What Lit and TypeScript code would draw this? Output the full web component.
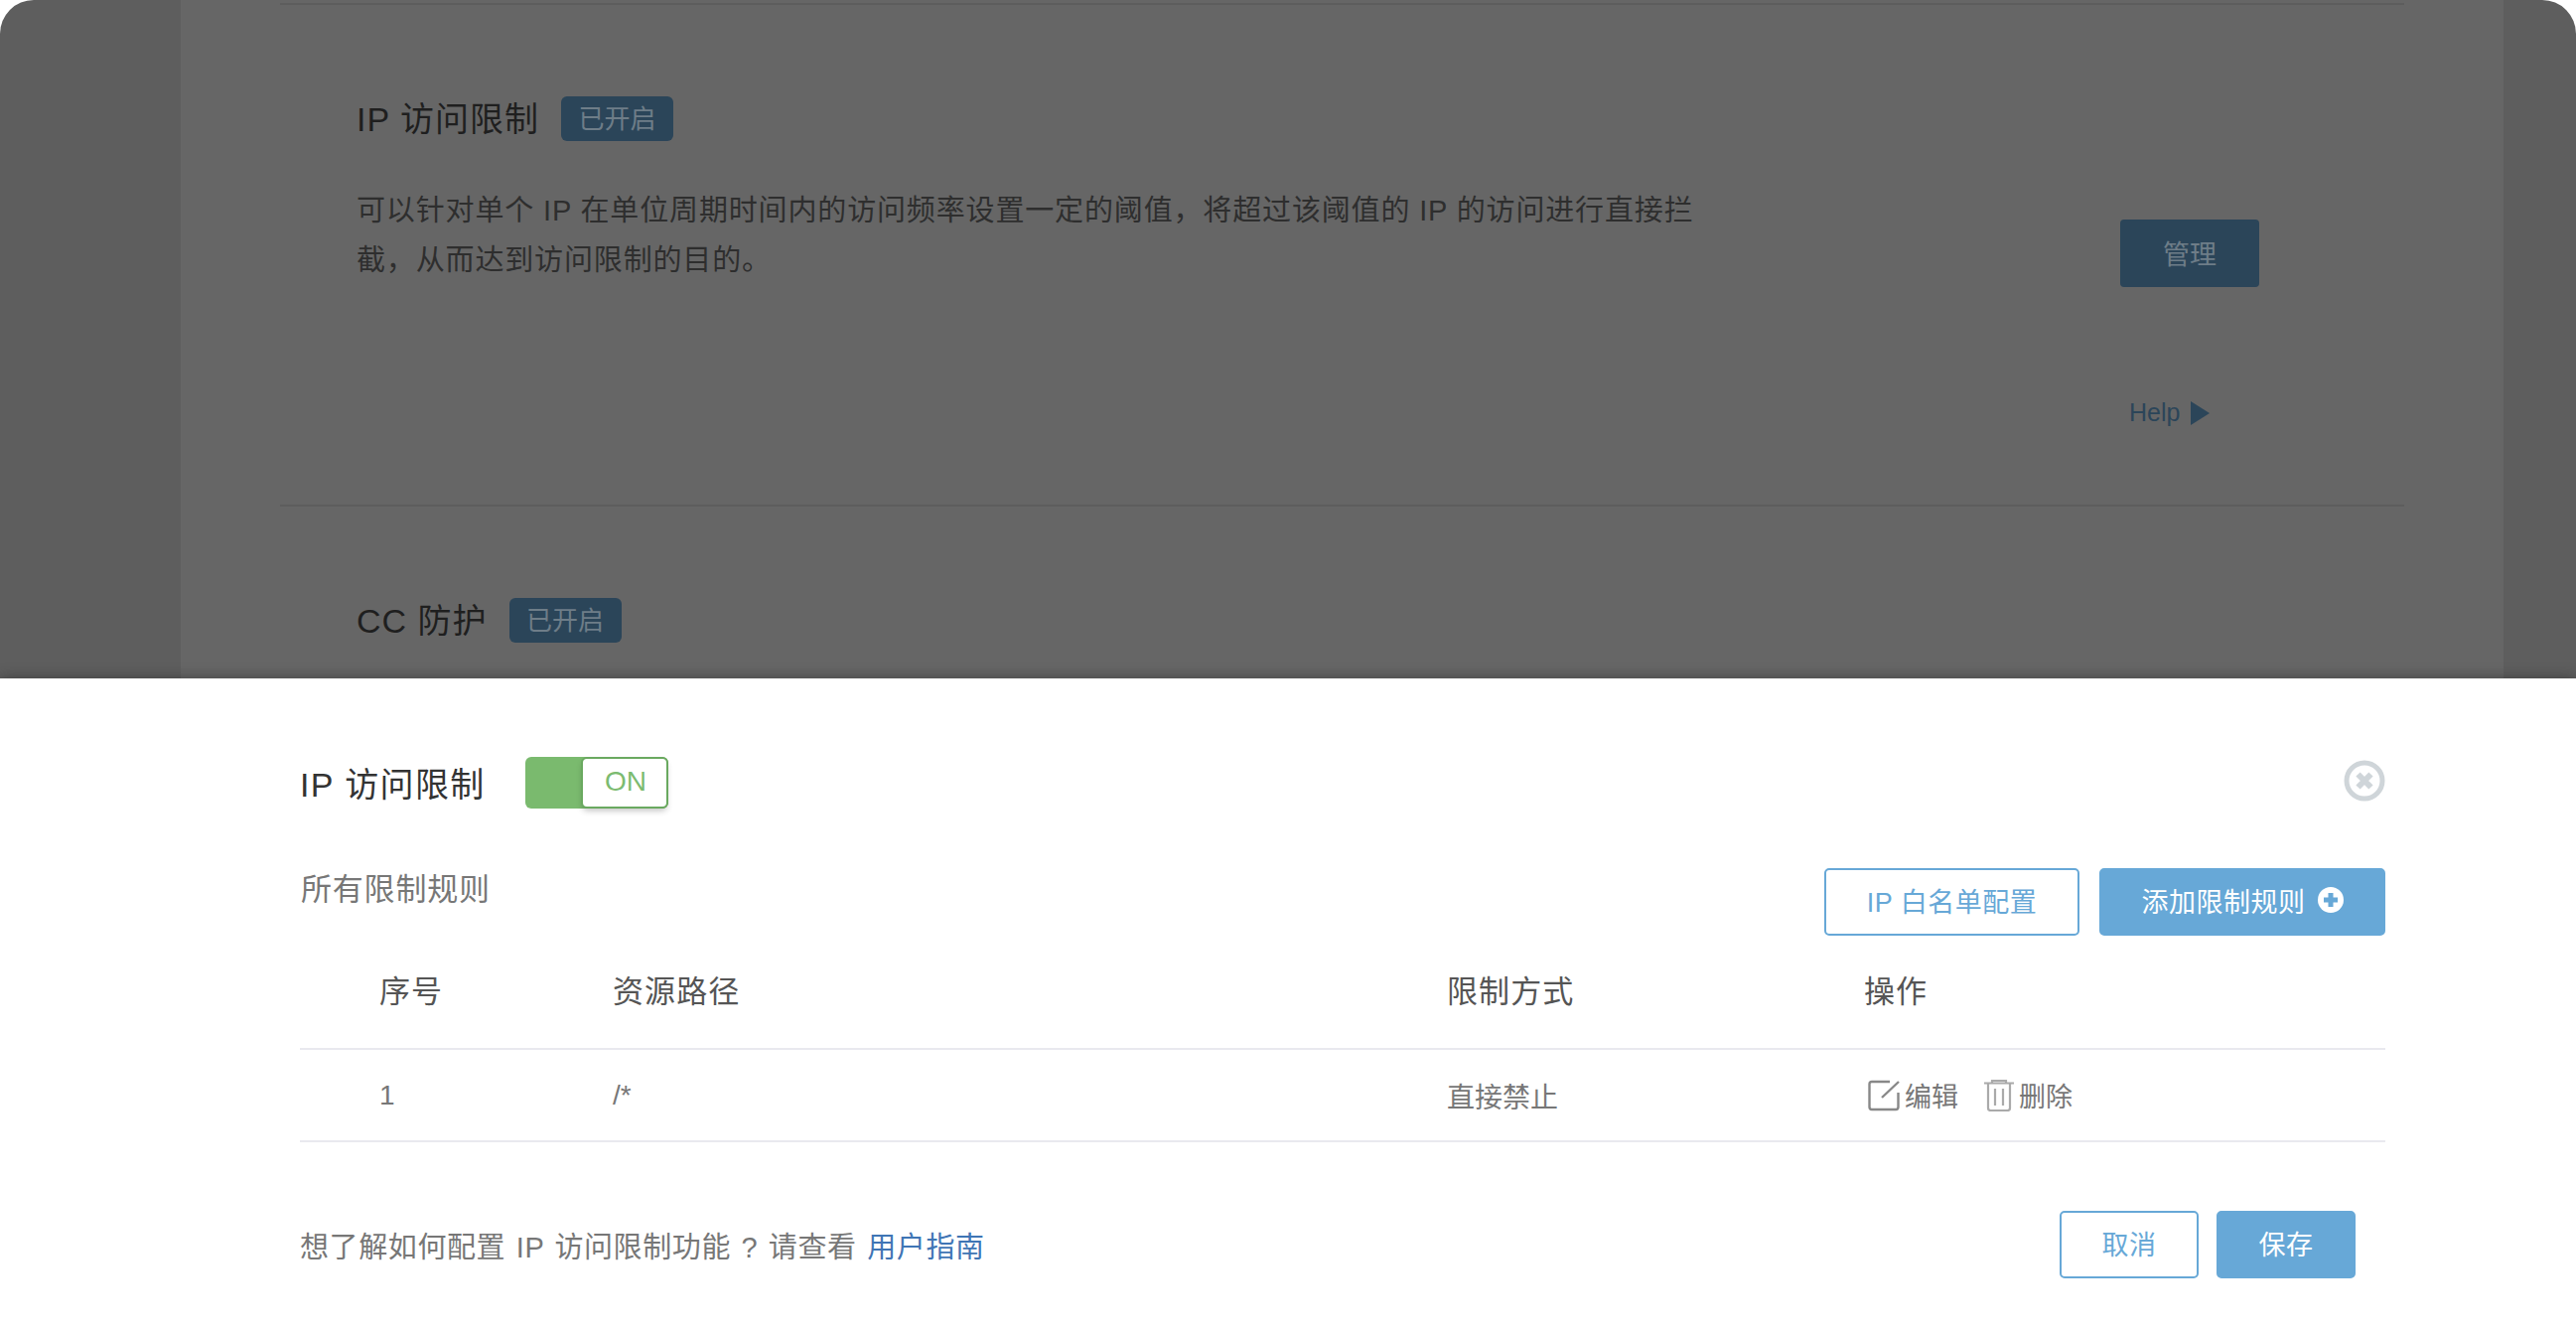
import { LitElement, html, css } from 'lit';
import { customElement } from 'lit/decorators.js';

@customElement('app-root')
export class AppRoot extends LitElement {
	static styles = css`
		:host {
			display: flex;
			flex-direction: column;
			height: 1340px;
			background: #fff;
			overflow: hidden;
			font-family: 'Liberation Sans', 'Noto Sans CJK SC', sans-serif;
		}

		/* dimmed page behind the drawer */
		.backdrop {
			height: 683px;
			flex: none;
			display: grid;
			grid-template-columns: 182px 1fr 73px;
			background: #5e5e5e;
			border-radius: 34px 34px 0 0;
			overflow: hidden;
		}
		.content {
			background: #666;
			padding: 3px 100px 0;
		}
		.section {
			border-top: 2px solid #5d5d5d;
			display: flex;
			justify-content: space-between;
			padding: 92px 146px 0 77px;
		}
		.section.first {
			height: 411px;
		}
		.heading {
			display: flex;
			align-items: center;
			gap: 22px;
			height: 45px;
		}
		.heading h2 {
			margin: -5px 0 0;
			font-size: 34px;
			font-weight: 400;
			letter-spacing: 1px;
			color: #1f1f1f;
		}
		.tag {
			height: 45px;
			box-sizing: border-box;
			padding: 0 17.5px 4px;
			display: flex;
			align-items: center;
			border-radius: 6px;
			background: #2b4559;
			color: #6e7d88;
			font-size: 26px;
		}
		.desc {
			margin: 45px 0 0;
			width: 1360px;
			font-size: 29px;
			line-height: 50px;
			letter-spacing: 0.85px;
			color: #2e2e2e;
		}
		.side {
			width: 140px;
			padding-top: 124px;
			display: flex;
			flex-direction: column;
			align-items: flex-start;
		}
		.manage {
			width: 140px;
			height: 68px;
			box-sizing: border-box;
			padding-bottom: 2px;
			display: flex;
			align-items: center;
			justify-content: center;
			border-radius: 4px;
			background: #2b4559;
			color: #6e7d88;
			font-size: 27px;
		}
		.help {
			margin: 112px 0 0 9px;
			display: flex;
			align-items: center;
			gap: 11px;
			color: #2b4559;
			font-size: 25px;
		}
		.help svg {
			width: 19px;
			height: 28px;
		}

		/* drawer */
		.drawer {
			flex: 1;
			position: relative;
			background: #fff;
			box-shadow: 0 0 14px rgba(0, 0, 0, 0.35);
			padding: 79px 192px 0 302px;
		}
		.drawer-head {
			display: flex;
			align-items: center;
			height: 52px;
		}
		.drawer-head h2 {
			margin: -2px 0 0;
			font-size: 34px;
			font-weight: 400;
			letter-spacing: 1.4px;
			color: #333;
			width: 227px;
		}
		.toggle {
			width: 144px;
			height: 52px;
			box-sizing: border-box;
			padding: 2px;
			border-radius: 6px;
			background: #7aba6e;
			display: flex;
			justify-content: flex-end;
		}
		.knob {
			width: 84px;
			box-sizing: border-box;
			padding: 0 0 3px 2px;
			display: flex;
			align-items: center;
			justify-content: center;
			border-radius: 4px;
			background: #fff;
			color: #7cbb70;
			font-size: 28px;
			box-shadow: 0 0 0 2px #6aa960, 0 4px 6px rgba(0, 0, 0, 0.25);
		}
		.close {
			width: 42px;
			height: 42px;
			margin: -5px 0 0 auto;
		}
		.toolbar {
			margin-top: 60px;
			display: flex;
			align-items: flex-start;
			gap: 20px;
		}
		.caption {
			margin: 0 auto 0 1px;
			font-size: 31px;
			letter-spacing: 0.8px;
			color: #777;
			line-height: 44px;
		}
		.btn {
			height: 68px;
			box-sizing: border-box;
			padding-bottom: 3px;
			display: flex;
			align-items: center;
			justify-content: center;
			gap: 12px;
			border-radius: 5px;
			border: 2.5px solid #67a8d7;
			font-size: 27px;
			letter-spacing: 0.5px;
		}
		.btn.line {
			background: #fff;
			color: #67a8d7;
		}
		.btn.fill {
			background: #67a8d7;
			color: #fff;
		}
		.whitelist {
			width: 257px;
		}
		.add {
			width: 288px;
		}
		.add svg {
			width: 26px;
			height: 26px;
			margin-top: -1px;
		}

		.rows {
			display: grid;
			grid-template-columns: 315px 840px 420px 1fr;
		}
		.row {
			display: contents;
		}
		.cell {
			display: flex;
			align-items: center;
			border-bottom: 2px solid #e9e9ef;
		}
		.cell:first-child {
			padding-left: 80px;
		}
		.th {
			height: 115px;
			box-sizing: border-box;
			padding-bottom: 6px;
			font-size: 31px;
			letter-spacing: 1.1px;
			color: #555;
		}
		.td {
			height: 91px;
			font-size: 28px;
			color: #777;
		}
		.ops {
			gap: 5px;
			padding-left: 4px;
			font-size: 27px;
		}
		.ops svg {
			width: 32px;
			height: 32px;
		}
		.ops .del {
			margin-left: 21px;
			width: 30px;
		}

		.foot {
			margin-top: 69px;
			display: flex;
			align-items: center;
			padding-right: 30px;
		}
		.note {
			margin: -1px auto 0 0;
			font-size: 29px;
			letter-spacing: 0.6px;
			word-spacing: 1.9px;
			color: #777;
		}
		.note a {
			color: #3f75b5;
		}
		.foot .btn {
			width: 140px;
			margin-left: 18px;
		}
	`;

	renderSection(title: string, desc: boolean) {
		return html`<div class="section ${desc ? 'first' : ''}">
			<div>
				<div class="heading"><h2>${title}</h2><span class="tag">已开启</span></div>
				${desc
					? html`<p class="desc">
							可以针对单个 IP 在单位周期时间内的访问频率设置一定的阈值，将超过该阈值的 IP
							的访问进行直接拦截，从而达到访问限制的目的。
						</p>`
					: ''}
			</div>
			${desc
				? html`<div class="side">
						<div class="manage">管理</div>
						<div class="help">
							Help
							<svg viewBox="0 0 19 28"><path d="M0 2 L19 14 L0 26 Z" fill="#2b4559" /></svg>
						</div>
					</div>`
				: ''}
		</div>`;
	}

	render() {
		return html`
			<div class="backdrop">
				<div></div>
				<div class="content">
					${this.renderSection('IP 访问限制', true)} ${this.renderSection('CC 防护', false)}
				</div>
				<div></div>
			</div>
			<div class="drawer">
				<div class="drawer-head">
					<h2>IP 访问限制</h2>
					<div class="toggle"><div class="knob">ON</div></div>
					<svg class="close" viewBox="0 0 42 42">
						<circle cx="21" cy="21" r="18" fill="none" stroke="#cfd5d9" stroke-width="5" />
						<path d="M14.5 14.5 L27.5 27.5 M27.5 14.5 L14.5 27.5" stroke="#cfd5d9" stroke-width="6" />
					</svg>
				</div>
				<div class="toolbar">
					<div class="caption">所有限制规则</div>
					<div class="btn line whitelist">IP 白名单配置</div>
					<div class="btn fill add">
						添加限制规则
						<svg viewBox="0 0 26 26">
							<circle cx="13" cy="13" r="13" fill="#fff" />
							<path d="M6 13 H20 M13 6 V20" stroke="#67a8d7" stroke-width="5" />
						</svg>
					</div>
				</div>
				<div class="rows">
					<div class="row">
						<div class="cell th">序号</div>
						<div class="cell th">资源路径</div>
						<div class="cell th">限制方式</div>
						<div class="cell th">操作</div>
					</div>
					<div class="row">
						<div class="cell td">1</div>
						<div class="cell td">/*</div>
						<div class="cell td">直接禁止</div>
						<div class="cell td ops">
							<svg viewBox="0 0 32 32" fill="none" stroke="#888" stroke-width="2.4">
								<path d="M22 2 H4 Q1.5 2 1.5 4.5 V27.5 Q1.5 30 4 30 H28 Q30.5 30 30.5 27.5 V13" />
								<path d="M14 18 L31 2" />
							</svg>
							编辑
							<svg class="del" viewBox="0 0 30 32" fill="none" stroke="#aaa" stroke-width="2.2">
								<path d="M0 3.5 H30 M8 3.5 V1 H22 V3.5" />
								<path d="M4 3.5 V28.5 Q4 31 6.5 31 H23.5 Q26 31 26 28.5 V3.5" />
								<path d="M11 9 V26 M19 9 V26" />
							</svg>
							删除
						</div>
					</div>
				</div>
				<div class="foot">
					<div class="note">想了解如何配置 IP 访问限制功能 ? 请查看 <a>用户指南</a></div>
					<div class="btn line">取消</div>
					<div class="btn fill">保存</div>
				</div>
			</div>
		`;
	}
}
